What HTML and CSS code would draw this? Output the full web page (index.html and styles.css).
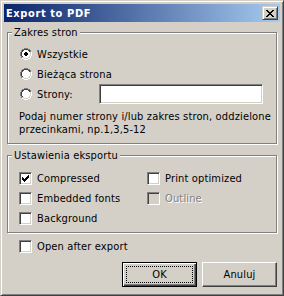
FILE: index.html
```html
<!DOCTYPE html>
<html>
    <head>
        <title>Export to PDF</title>
        <link rel="stylesheet" href="styles.css">
    </head>
    <body>
        <!-- shared pixel glyphs -->
        <svg class="defs" width="0" height="0">
            <symbol id="radio" viewBox="0 0 12 12">
                <path fill="#808080" d="M4 0h4v1h-4z M2 1h2v1h-2z M8 1h2v1h-2z M1 2h1v2h-1z M10 2h1v2h-1z M0 4h1v4h-1z M1 8h1v2h-1z"/>
                <path fill="#ffffff" d="M11 4h1v4h-1z M10 8h1v2h-1z M2 10h2v1h-2z M8 10h2v1h-2z M4 11h4v1h-4z"/>
                <path fill="#404040" d="M4 1h4v1h-4z M2 2h2v1h-2z M8 2h2v1h-2z M2 3h1v1h-1z M9 3h1v1h-1z M1 4h1v4h-1z M2 8h1v1h-1z"/>
                <path fill="#d4d0c8" d="M10 4h1v4h-1z M9 8h1v1h-1z M2 9h2v1h-2z M8 9h2v1h-2z M4 10h4v1h-4z"/>
                <path fill="#ffffff" d="M4 2h4v1h-4z M3 3h6v1h-6z M2 4h8v4h-8z M3 8h6v1h-6z M4 9h4v1h-4z"/>
            </symbol>
            <symbol id="radio-dot" viewBox="0 0 12 12">
                <path fill="#000000" d="M5 4h2v1h-2z M4 5h4v2h-4z M5 7h2v1h-2z"/>
            </symbol>
            <symbol id="check" viewBox="0 0 7 7">
                <path fill="#000000" d="M6 0h1v1h-1z M5 1h2v1h-2z M0 2h1v1h-1z M4 2h3v1h-3z M0 3h2v1h-2z M3 3h3v1h-3z M0 4h5v1h-5z M1 5h3v1h-3z M2 6h1v1h-1z"/>
            </symbol>
        </svg>

        <div class="window">
            <div class="titlebar">
                <span class="title">Export to PDF</span>
                <span class="close-btn">
                    <svg width="8" height="7" viewBox="0 0 8 7" shape-rendering="crispEdges">
                        <path fill="#000000" d="M0 0h2v1h-2z M6 0h2v1h-2z M1 1h2v1h-2z M5 1h2v1h-2z M2 2h4v1h-4z M3 3h2v1h-2z M2 4h4v1h-4z M1 5h2v1h-2z M5 5h2v1h-2z M0 6h2v1h-2z M6 6h2v1h-2z"/>
                    </svg>
                </span>
            </div>

            <div class="client">
                <fieldset class="group group-range">
                    <legend>Zakres stron</legend>
                    <div class="row">
                        <svg class="radio" width="12" height="12" shape-rendering="crispEdges"><use href="#radio"/><use href="#radio-dot"/></svg>
                        <span>Wszystkie</span>
                    </div>
                    <div class="row">
                        <svg class="radio" width="12" height="12" shape-rendering="crispEdges"><use href="#radio"/></svg>
                        <span>Bieżąca strona</span>
                    </div>
                    <div class="row">
                        <svg class="radio" width="12" height="12" shape-rendering="crispEdges"><use href="#radio"/></svg>
                        <span class="pages-label">Strony:</span>
                        <span class="textbox"></span>
                    </div>
                    <p class="hint">Podaj numer strony i/lub zakres stron, oddzielone<br>przecinkami, np.1,3,5-12</p>
                </fieldset>

                <fieldset class="group group-export">
                    <legend>Ustawienia eksportu</legend>
                    <div class="options">
                        <div class="row">
                            <span class="checkbox"><svg width="7" height="7" shape-rendering="crispEdges"><use href="#check"/></svg></span>
                            <span>Compressed</span>
                        </div>
                        <div class="row">
                            <span class="checkbox"></span>
                            <span>Print optimized</span>
                        </div>
                        <div class="row">
                            <span class="checkbox"></span>
                            <span>Embedded fonts</span>
                        </div>
                        <div class="row disabled">
                            <span class="checkbox"></span>
                            <span>Outline</span>
                        </div>
                        <div class="row">
                            <span class="checkbox"></span>
                            <span>Background</span>
                        </div>
                    </div>
                </fieldset>

                <div class="row open-row">
                    <span class="checkbox"></span>
                    <span>Open after export</span>
                </div>

                <div class="buttons">
                    <button class="btn btn-default"><span class="focus">OK</span></button>
                    <button class="btn">Anuluj</button>
                </div>
            </div>
        </div>
    </body>
</html>
```

FILE: styles.css
```css
body {
    margin: 0;
    background-color: #d4d0c8;
    font-family: "DejaVu Sans Condensed", "DejaVu Sans", sans-serif;
    font-size: 11px;
    letter-spacing: 0.15px;
    color: #000;
}
.defs {
    display: block;
    width: 0;
    height: 0;
    overflow: hidden;
}
.window {
    width: 284px;
    height: 296px;
    box-sizing: border-box;
    border: 1px solid;
    border-color: #d4d0c8 #404040 #404040 #d4d0c8;
    box-shadow: inset 1px 1px 0 #fff, inset -1px -1px 0 #808080;
    padding: 3px;
    background-color: #d4d0c8;
}
.titlebar {
    height: 18px;
    display: flex;
    align-items: center;
    justify-content: space-between;
    background: linear-gradient(to right, #0a246a, #a6caf0);
    padding-left: 2px;
}
.title {
    color: #fff;
    font-weight: bold;
    letter-spacing: 0.6px;
}
.close-btn {
    width: 16px;
    height: 14px;
    box-sizing: border-box;
    margin-right: 2px;
    padding: 3px 0 0 4px;
    background-color: #d4d0c8;
    border: 1px solid;
    border-color: #d4d0c8 #404040 #404040 #d4d0c8;
    box-shadow: inset 1px 1px 0 #fff, inset -1px -1px 0 #808080;
}
.close-btn svg {
    display: block;
    margin: 0 0 0 -1px;
}
.client {
    padding: 0 3px;
}
.group {
    margin: 4px 0 0;
    padding: 5px 0 7px 11px;
    min-width: 0;
    border: 1px solid #808080;
    box-shadow: inset 1px 1px 0 #fff, 1px 1px 0 #fff;
}
.group legend {
    margin-left: -7px;
    padding: 0 2px;
    line-height: 13px;
    background-color: #d4d0c8;
}
.group-export {
    margin-top: 5px;
    padding: 6px 0 4px 11px;
}
.row {
    display: flex;
    align-items: center;
    height: 20px;
    white-space: nowrap;
}
.radio {
    display: block;
    margin: 0 5px 0 1px;
    flex: none;
}
.pages-label {
    width: 62px;
}
.textbox {
    width: 164px;
    height: 20px;
    box-sizing: border-box;
    background-color: #fff;
    border: 1px solid;
    border-color: #808080 #fff #fff #808080;
    box-shadow: inset 1px 1px 0 #404040, inset -1px -1px 0 #d4d0c8;
}
.hint {
    margin: 6px 0 0;
    line-height: 13px;
}
.options {
    display: grid;
    grid-template-columns: 128px 1fr;
}
.checkbox {
    width: 13px;
    height: 13px;
    box-sizing: border-box;
    flex: none;
    margin-right: 5px;
    padding: 2px;
    background-color: #fff;
    border: 1px solid;
    border-color: #808080 #fff #fff #808080;
    box-shadow: inset 1px 1px 0 #404040, inset -1px -1px 0 #d4d0c8;
}
.checkbox svg {
    display: block;
}
.disabled .checkbox {
    background-color: #d4d0c8;
}
.disabled span:last-child {
    color: #808080;
    text-shadow: 1px 1px 0 #fff;
}
.open-row {
    margin: 3px 0 0 12px;
}
.buttons {
    display: flex;
    justify-content: flex-end;
    gap: 5px;
    margin-top: 6px;
}
.btn {
    width: 75px;
    height: 25px;
    box-sizing: border-box;
    padding: 0;
    font-family: inherit;
    font-size: 11px;
    letter-spacing: inherit;
    color: #000;
    background-color: #d4d0c8;
    border: 1px solid;
    border-color: #fff #404040 #404040 #fff;
    box-shadow: inset -1px -1px 0 #808080;
}
.btn-default {
    border: 1px solid #000;
    box-shadow: inset 1px 1px 0 #fff, inset -1px -1px 0 #404040, inset -2px -2px 0 #808080;
    padding: 3px;
}
.focus {
    display: flex;
    align-items: center;
    justify-content: center;
    height: 100%;
    border: 1px dotted #000;
    box-sizing: border-box;
}
```
